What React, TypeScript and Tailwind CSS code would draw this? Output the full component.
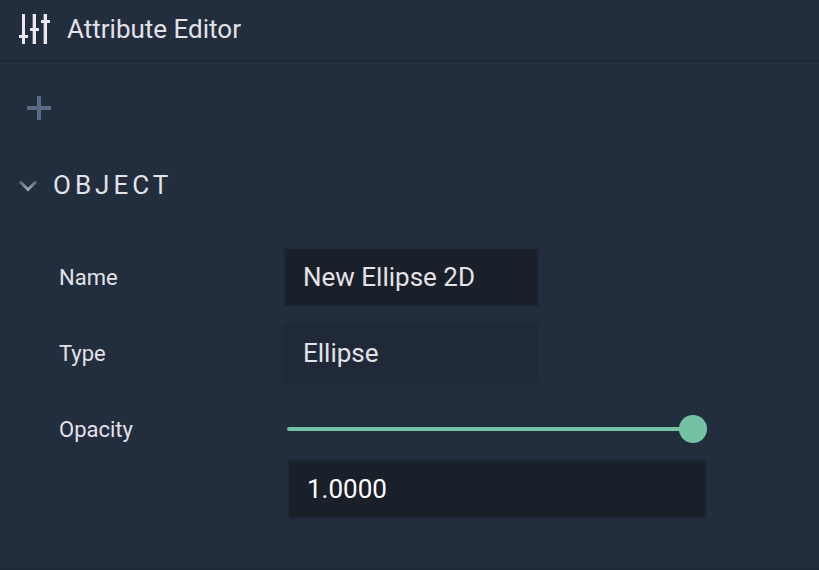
import { useState } from "react";

function SlidersIcon() {
  return (
    <svg width="33" height="32" viewBox="0 0 33 32" fill="#e9e6ef" aria-hidden="true">
      <path d="M4 0h3v30H4zM1 21h9v3H1zM15 0h3v30h-3zM12 14h9v3h-9zM26 0h3v30h-3zM23 6h9v3h-9z" />
      <path d="M14 0h1v30h-1zM25 0h1v30h-1z" opacity="0.35" />
    </svg>
  );
}

function PlusIcon() {
  return (
    <svg width="24" height="24" viewBox="0 0 24 24" fill="#5b6a85" aria-hidden="true">
      <path d="M10 0h4v10h10v4H14v10h-4V14H0v-4h10z" />
    </svg>
  );
}

function ChevronIcon() {
  return (
    <svg width="18" height="12" viewBox="0 0 18 12" fill="none" aria-hidden="true">
      <defs>
        <linearGradient id="chevron" x1="0" y1="0" x2="0" y2="1">
          <stop offset="0" stopColor="#5f6878" />
          <stop offset="1" stopColor="#a3a6b0" />
        </linearGradient>
      </defs>
      <path d="M1 1.500L9 9.500L17 1.500" stroke="url(#chevron)" strokeWidth="2.800" />
    </svg>
  );
}

const field =
  "h-15 w-full border-2 border-[#1f2937] px-[18px] text-[26px] outline-none";
const label = "flex h-15 items-center text-[22px]";

export default function App() {
  const [name, setName] = useState("New Ellipse 2D");
  const [opacity, setOpacity] = useState("1.0000");

  return (
    <main className="flex min-h-screen flex-col border-b-2 border-[#1e2836] bg-[#222d3d] font-['Roboto',sans-serif] text-[#e2e2e8]">
      <header className="flex h-[62px] items-center gap-4 border-b-2 border-[#1e2836] pl-[18px]">
        <SlidersIcon />
        <h1 className="pb-0.5 text-[26px]">Attribute Editor</h1>
      </header>

      <div className="flex h-[92px] items-center pl-[27px]">
        <button type="button" aria-label="Add attribute">
          <PlusIcon />
        </button>
      </div>

      <section>
        <h2>
          <button type="button" aria-expanded="true" className="flex h-16 w-full items-center gap-4 pl-[19px] text-[26px] tracking-[4px]">
            <ChevronIcon />
            <span className="pb-0.5">OBJECT</span>
          </button>
        </h2>

        <div className="grid grid-cols-[224px_1fr] gap-y-4 pt-[29px] pr-28 pl-[59px]">
          <label htmlFor="name" className={label}>Name</label>
          <div className="max-w-64">
            <input
              id="name"
              value={name}
              onChange={(e) => setName(e.target.value)}
              className={`${field} bg-[#1a202a]`}
            />
          </div>

          <label htmlFor="type" className={label}>Type</label>
          <div className="max-w-64">
            <input id="type" value="Ellipse" readOnly className={`${field} bg-[#1f2937]`} />
          </div>

          <label htmlFor="opacity" className={label}>Opacity</label>
          <div className="pl-1">
            <div className="flex h-15 items-center">
              <input
                id="opacity"
                type="range"
                min="0"
                max="1"
                step="0.0001"
                value={opacity}
                onChange={(e) => setOpacity(Number(e.target.value).toFixed(4))}
                className="h-7 w-full appearance-none bg-transparent [&::-webkit-slider-runnable-track]:h-1 [&::-webkit-slider-runnable-track]:rounded-full [&::-webkit-slider-runnable-track]:bg-[#73c2a3] [&::-webkit-slider-thumb]:-mt-3 [&::-webkit-slider-thumb]:size-7 [&::-webkit-slider-thumb]:appearance-none [&::-webkit-slider-thumb]:rounded-full [&::-webkit-slider-thumb]:bg-[#73c2a3]"
              />
            </div>
            <input
              aria-label="Opacity value"
              value={opacity}
              onChange={(e) => setOpacity(e.target.value)}
              className={`${field} bg-[#1a202a] text-white`}
            />
          </div>
        </div>
      </section>
    </main>
  );
}
